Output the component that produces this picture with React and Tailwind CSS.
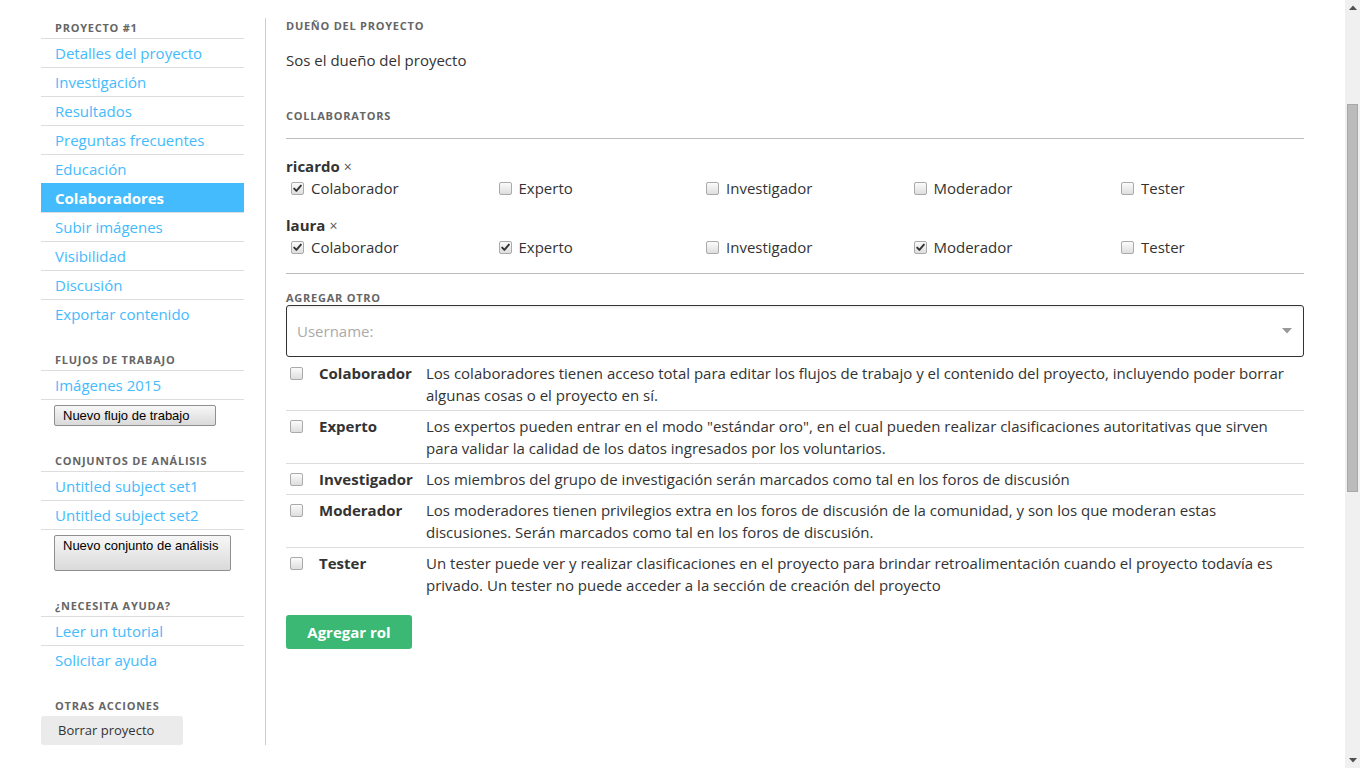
import React from "react";

function Box({ checked }) {
  return (
    <span className="inline-flex w-[13px] h-[13px] shrink-0 items-center justify-center rounded-[2px] border border-[#aaaaaa] bg-gradient-to-b from-[#fbfbfb] to-[#dedede]">
      {checked && (
        <svg width="9" height="9" viewBox="0 0 9 9">
          <path d="M1.2 4.6 L3.4 6.9 L7.9 1.6" fill="none" stroke="#333" strokeWidth="1.9" strokeLinecap="round" strokeLinejoin="round" />
        </svg>
      )}
    </span>
  );
}

function SideHeading({ children, className = "" }) {
  return (
    <div className={"pl-[14px] h-[20px] leading-[20px] text-[11px] font-bold uppercase tracking-[0.75px] text-[#666] " + className}>
      {children}
    </div>
  );
}

function SideLink({ children, active }) {
  return (
    <div
      className={
        "h-[29px] border-t pl-[14px] leading-[28px] text-[15px] " +
        (active ? "border-transparent bg-[#43bbfd] font-bold text-white" : "border-[#dddddd] text-[#43bbfd]")
      }
    >
      {children}
    </div>
  );
}

function MainHeading({ children, className = "" }) {
  return (
    <div className={"h-[14px] leading-[16px] text-[11px] font-bold uppercase tracking-[0.75px] text-[#666] " + className}>
      {children}
    </div>
  );
}

const ROLES = ["Colaborador", "Experto", "Investigador", "Moderador", "Tester"];

function Collaborator({ name, checks, className = "" }) {
  return (
    <div className={className}>
      <div className="h-[22px] leading-[22px] text-[15px]">
        <span className="font-bold text-[#333]">{name}</span>
        <span className="ml-[4px] text-[14px] text-[#555]">×</span>
      </div>
      <div className="grid grid-cols-[repeat(5,207.5px)] h-[22px]">
        {ROLES.map((r, i) => (
          <div key={r} className="flex items-center pl-[5px] h-[22px]">
            <Box checked={checks[i]} />
            <span className="ml-[7px] text-[15px] leading-[22px] text-[#333]">{r}</span>
          </div>
        ))}
      </div>
    </div>
  );
}

const DESCS = [
  ["Colaborador", "Los colaboradores tienen acceso total para editar los flujos de trabajo y el contenido del proyecto, incluyendo poder borrar algunas cosas o el proyecto en sí."],
  ["Experto", "Los expertos pueden entrar en el modo \"estándar oro\", en el cual pueden realizar clasificaciones autoritativas que sirven para validar la calidad de los datos ingresados por los voluntarios."],
  ["Investigador", "Los miembros del grupo de investigación serán marcados como tal en los foros de discusión"],
  ["Moderador", "Los moderadores tienen privilegios extra en los foros de discusión de la comunidad, y son los que moderan estas discusiones. Serán marcados como tal en los foros de discusión."],
  ["Tester", "Un tester puede ver y realizar clasificaciones en el proyecto para brindar retroalimentación cuando el proyecto todavía es privado. Un tester no puede acceder a la sección de creación del proyecto"],
];

export default function App() {
  return (
    <div className="flex h-[768px] overflow-hidden bg-white font-['Open_Sans',sans-serif] text-[#333]">
      <div className="flex-1 pl-[41px] pt-[18px]">
        <div className="flex items-stretch">
          {/* Sidebar */}
          <aside className="w-[203px] shrink-0">
            <SideHeading>Proyecto #1</SideHeading>
            <SideLink>Detalles del proyecto</SideLink>
            <SideLink>Investigación</SideLink>
            <SideLink>Resultados</SideLink>
            <SideLink>Preguntas frecuentes</SideLink>
            <SideLink>Educación</SideLink>
            <SideLink active>Colaboradores</SideLink>
            <SideLink>Subir imágenes</SideLink>
            <SideLink>Visibilidad</SideLink>
            <SideLink>Discusión</SideLink>
            <SideLink>Exportar contenido</SideLink>

            <SideHeading className="mt-[22px]">Flujos de trabajo</SideHeading>
            <SideLink>Imágenes 2015</SideLink>
            <div className="border-t border-[#dddddd] pt-[5px] pb-[3px] pl-[13px]">
              <button className="block w-[162px] h-[21px] rounded-[2px] border border-[#8f8f8f] bg-gradient-to-b from-[#f7f7f7] to-[#dadada] pl-[8px] text-left font-['Liberation_Sans',Arial,sans-serif] text-[13px] leading-[18px] text-black">
                Nuevo flujo de trabajo
              </button>
            </div>

            <SideHeading className="mt-[22px]">Conjuntos de análisis</SideHeading>
            <SideLink>Untitled subject set1</SideLink>
            <SideLink>Untitled subject set2</SideLink>
            <div className="border-t border-[#dddddd] pt-[5px] pb-[3px] pl-[13px]">
              <button className="flex items-start w-[177px] h-[36px] rounded-[2px] border border-[#8f8f8f] bg-gradient-to-b from-[#f7f7f7] to-[#dadada] pl-[8px] pt-[1px] text-left font-['Liberation_Sans',Arial,sans-serif] text-[13px] leading-[18px] text-black">
                Nuevo conjunto de análisis
              </button>
            </div>

            <SideHeading className="mt-[22px]">¿Necesita ayuda?</SideHeading>
            <SideLink>Leer un tutorial</SideLink>
            <SideLink>Solicitar ayuda</SideLink>

            <SideHeading className="mt-[22px]">Otras acciones</SideHeading>
            <button className="block w-[142px] h-[29px] rounded-[3px] bg-[#ebebeb] pl-[17px] text-left text-[13px] text-[#333]">
              Borrar proyecto
            </button>
          </aside>

          {/* Main */}
          <main className="ml-[21px] w-[1039px] shrink-0 border-l border-[#cccccc] pl-[20px]">
            <div className="w-[1018px]">
              <MainHeading>Dueño del proyecto</MainHeading>
              <p className="mt-[17px] text-[15px] leading-[22px]">Sos el dueño del proyecto</p>

              <MainHeading className="mt-[37px]">Collaborators</MainHeading>
              <div className="mt-[16px] border-t border-[#bbbbbb]" />

              <Collaborator className="mt-[16px]" name="ricardo" checks={[true, false, false, false, false]} />
              <Collaborator className="mt-[15px]" name="laura" checks={[true, true, false, true, false]} />

              <div className="mt-[15px] border-t border-[#bbbbbb]" />

              <MainHeading className="mt-[16px]">Agregar otro</MainHeading>
              <div className="mt-[1px] flex h-[52px] items-center justify-between rounded-[3px] border border-[#333] px-[10px] shadow-[inset_0_2px_2px_rgba(0,0,0,0.06)]">
                <span className="text-[15px] text-[#aaaaaa]">Username:</span>
                <svg width="10" height="6" viewBox="0 0 10 6" className="mr-[1px]">
                  <path d="M0 0 H10 L5 5.5 Z" fill="#999" />
                </svg>
              </div>

              <div className="mt-[1px]">
                {DESCS.map(([label, desc], i) => (
                  <div
                    key={label}
                    className={"grid grid-cols-[29px_107px_1fr] py-[4px] " + (i > 0 ? "border-t border-[#dddddd]" : "")}
                  >
                    <div className="flex h-[22px] items-center pl-[4px]">
                      <Box checked={false} />
                    </div>
                    <div className="px-[4px] text-[15px] font-bold leading-[22px]">{label}</div>
                    <div className="px-[4px] text-[15px] leading-[22px]">{desc}</div>
                  </div>
                ))}
              </div>

              <button className="mt-[15px] h-[34px] w-[126px] rounded-[3px] bg-[#3bb874] text-[15px] font-bold text-white">
                Agregar rol
              </button>
            </div>
          </main>
        </div>
      </div>

      {/* Scrollbar */}
      <div className="flex w-[15px] shrink-0 flex-col items-center bg-[#f0f0f0]">
        <svg width="8" height="5" viewBox="0 0 8 5" className="mt-[5px]">
          <path d="M0 5 L4 0.5 L8 5 Z" fill="#505050" />
        </svg>
        <div className="mt-[94px] h-[388px] w-[11px] border border-[#a8a8a8] bg-[#bbbbbb]" />
        <div className="flex-1" />
        <svg width="8" height="5" viewBox="0 0 8 5" className="mb-[5px]">
          <path d="M0 0 H8 L4 4.5 Z" fill="#505050" />
        </svg>
      </div>
    </div>
  );
}
